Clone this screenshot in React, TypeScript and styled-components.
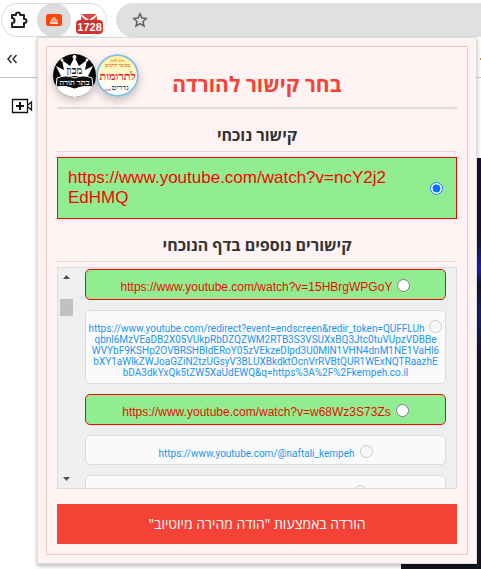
import React, { useState } from "react";
import styled, { createGlobalStyle, css } from "styled-components";

const GlobalStyle = createGlobalStyle`
  * { box-sizing: border-box; }
  body {
    margin: 0;
    background: #fff;
    overflow: hidden;
    font-family: "Open Sans", "Liberation Sans", sans-serif;
  }
`;

const Screen = styled.div`
  position: relative;
  min-height: 100vh;
  display: flex;
  flex-direction: column;
`;

const BrowserBar = styled.header`
  display: flex;
  align-items: center;
  gap: 9px;
  height: 40px;
  padding: 0 0 0 1px;
`;

const ExtensionPill = styled.div`
  display: flex;
  align-items: center;
  width: 106px;
  height: 34px;
  border: 1px solid #dcdcdc;
  border-radius: 17px;
`;

const ToolButton = styled.button<{ $active?: boolean }>`
  position: relative;
  display: flex;
  align-items: center;
  justify-content: center;
  width: 35px;
  height: 34px;
  padding: 0;
  border: 0;
  border-radius: 17px;
  background: ${(p) => (p.$active ? "#dcdcdc" : "transparent")};
`;

const Badge = styled.span`
  position: absolute;
  left: 5px;
  top: 17px;
  padding: 0 1px;
  border-radius: 4px;
  background: #d2302f;
  color: #fff;
  font: bold 11px/14px "Liberation Sans", sans-serif;
`;

const AddressBar = styled.div`
  flex: 1;
  display: flex;
  align-items: center;
  height: 34px;
  padding-left: 16px;
  border-radius: 17px 0 0 17px;
  background: #e0e0e0;
`;

const StarButton = styled.button`
  display: flex;
  padding: 0;
  border: 0;
  background: none;
`;

const Masthead = styled.div`
  display: flex;
  align-items: center;
  justify-content: space-between;
  height: 38px;
  padding-left: 6px;
  border-bottom: 1px solid #c6c6c6;
`;

const Accent = styled.span`
  width: 1px;
  height: 2px;
  background: #e58a2c;
`;

const PageBody = styled.main`
  flex: 1;
  display: flex;
  justify-content: space-between;
  padding-left: 11px;
`;

const CreateButton = styled.button`
  align-self: flex-start;
  display: flex;
  margin-top: 20px;
  padding: 0;
  border: 0;
  background: none;
`;

const VideoBackdrop = styled.div`
  width: 80px;
  margin-top: 80px;
  background: linear-gradient(#15122c, #17152d 20%, #251fa0 27%, #16142a 31%, #201b62 38%, #15131f 50%, #15131f);
`;

const Popup = styled.section`
  position: absolute;
  top: 37px;
  left: 37px;
  right: 4px;
  padding: 8px;
  border: 1px solid #d8dde0;
  background: #fff4f3;
  box-shadow: 0 2px 4px rgba(0, 0, 0, 0.28);
`;

const Panel = styled.form`
  position: relative;
  display: flex;
  flex-direction: column;
  padding: 10px;
  border: 1px solid #f5c6c6;
`;

const Logos = styled.div`
  position: absolute;
  top: 7px;
  left: 6px;
  display: flex;
`;

const Logo = styled.svg`
  display: block;
  width: 43px;
  height: 43px;
  border-radius: 50%;
  box-shadow: 0 4px 8px rgba(0, 0, 0, 0.22);
`;

const Title = styled.h1`
  margin: 0;
  padding: 12px 0 8px;
  border-bottom: 2px solid #dcdcdc;
  color: #f44336;
  font-size: 21px;
  line-height: 30px;
  text-align: center;
`;

const SectionTitle = styled.h2`
  margin: 15px 0 5px;
  padding-bottom: 5px;
  border-bottom: 1px solid #dcdcdc;
  color: #333;
  font-size: 16px;
  line-height: 22px;
  text-align: center;
`;

const Radio = styled.input`
  flex: none;
  width: 13px;
  height: 13px;
  margin: 0;
`;

const CurrentLink = styled.label`
  display: flex;
  align-items: center;
  justify-content: space-between;
  padding: 10px 13px 10px 10px;
  border: 1px solid #f00;
  background: #90ee90;
  color: #f00;
  font: 17px/20px "Liberation Sans", sans-serif;
  white-space: pre-line;
`;

const ListFrame = styled.div`
  display: flex;
  height: 222px;
  border: 1px solid #dcdcdc;
  background: #efefef;
`;

const ScrollTrack = styled.div`
  display: flex;
  flex-direction: column;
  align-items: center;
  width: 17px;
  padding: 7px 0;
`;

const ScrollArrow = styled.svg`
  width: 7px;
  height: 4px;
`;

const ScrollThumb = styled.div`
  width: 13px;
  height: 17px;
  margin: 20px 0 auto;
  background: #c1c1c1;
`;

const LinkList = styled.div`
  flex: 1;
  display: flex;
  flex-direction: column;
  gap: 10px;
  padding: 1px 10px 0;
  overflow: hidden;
`;

const LinkRow = styled.label<{ $video: boolean }>`
  flex: none;
  display: block;
  border: 1px solid #dcdcdc;
  border-radius: 5px;
  background: #fafafa;
  color: #2196f3;
  text-align: center;
  white-space: pre-line;
  font-family: Roboto, "Liberation Sans", sans-serif;
  font-size: 10px;
  line-height: 11px;
  padding: 9px 1px 5px;

  ${Radio} {
    margin-left: 5px;
    vertical-align: -1px;
  }

  ${(p) =>
    p.$video &&
    css`
      border-color: #f00;
      background: #90ee90;
      color: #e60f00;
      font-family: "Liberation Sans", sans-serif;
      font-size: 12px;
      line-height: 14px;
      padding: 9px 1px 5px;
    `}
`;

const EmptyLink = styled.span`
  display: inline-block;
  width: 184px;
`;

const DownloadButton = styled.button`
  height: 40px;
  margin-top: 15px;
  border: 0;
  background: #f44336;
  color: #fff;
  font: 500 14px/20px "Open Sans", sans-serif;
`;

const links = [
  { url: "https://www.youtube.com/watch?v=15HBrgWPGoY", video: true },
  {
    url: `https://www.youtube.com/redirect?event=endscreen&redir_token=QUFFLUh
qbnl6MzVEaDB2X05VUkpRbDZQZWM2RTB3S3VSUXxBQ3Jtc0tuVUpzVDBBe
WVYbF9KSHp2OVBRSHBldERoY05zVEkzeDlpd3U0MlN1VHN4dnM1NE1VaHl6
bXY1aWlkZWJoaGZiN2tzUGsyV3BLUXBkdktOcnVrRVBtQUR1WExNQTRaazhE
bDA3dkYxQk5tZW5XaUdEWQ&q=https%3A%2F%2Fkempeh.co.il`,
    video: false,
  },
  { url: "https://www.youtube.com/watch?v=w68Wz3S73Zs", video: true },
  { url: "https://www.youtube.com/@naftali_kempeh", video: false },
  { url: "", video: false },
];

function CrownLogo() {
  return (
    <Logo viewBox="0 0 43 43">
      <rect width="43" height="43" fill="#050505" />
      <path d="M0 31q21-3 43 0v12H0z" fill="#fff" />
      <path d="M8 22 3 12l8 4-2-10 8 6 4.500-9 4.500 9 8-6-2 10 8-4-5 10z" fill="#fff" />
      <g fill="#fff">
        <circle cx="21.500" cy="3" r="2" />
        <circle cx="9" cy="6" r="1.500" />
        <circle cx="34" cy="6" r="1.500" />
      </g>
      <path d="M4 24q9-4 17.500 0 8.500-4 17.500 0l1 9q-10-2-18.500 2-8.500-4-18.500-2z" fill="#111" stroke="#fff" />
      <g fontFamily="Liberation Serif, serif" fontWeight="bold" textAnchor="middle">
        <text x="21.500" y="20" fontSize="10" fill="#111">מכון</text>
        <text x="21.500" y="31" fontSize="8" fill="#fff">כתר תורה</text>
      </g>
    </Logo>
  );
}

function DonationLogo() {
  return (
    <Logo viewBox="0 0 43 43">
      <defs>
        <linearGradient id="donation" x2="0" y2="1">
          <stop offset="0" stopColor="#fff09a" />
          <stop offset="0.4" stopColor="#fff8c8" />
          <stop offset="0.8" stopColor="#ffffff" />
        </linearGradient>
      </defs>
      <circle cx="21.500" cy="21.500" r="20.500" fill="url(#donation)" stroke="#7fc0ea" strokeWidth="2" />
      <g fontFamily="Liberation Serif, serif" fontWeight="bold" textAnchor="middle">
        <text x="21.500" y="8" fontSize="4" fill="#d9662f">ניתן לתת</text>
        <text x="21.500" y="13" fontSize="5" fill="#d9662f">במזכר הרבים</text>
        <text x="21.500" y="26" fontSize="11" fill="#e8182c">לתרומות</text>
        <text x="24" y="36" fontSize="8" fill="#17567c">נדרים</text>
        <text x="12" y="37" fontSize="3" fill="#e8182c">פלוס</text>
      </g>
    </Logo>
  );
}

export default function App() {
  const [selected, setSelected] = useState(-1);

  return (
    <Screen>
      <GlobalStyle />
      <BrowserBar>
        <ExtensionPill>
          <ToolButton aria-label="Extensions">
            <svg width="18" height="18" viewBox="0 0 18 18" fill="none" stroke="#1f1f1f" strokeWidth="2" strokeLinejoin="round">
              <path d="M2 4h4V3a2 1.500 0 0 1 4 0v1h4v4h.5a2 2 0 0 1 0 4H14v4H2v-4a2 2 0 0 0 0-5z" />
            </svg>
          </ToolButton>
          <ToolButton $active aria-label="Video downloader">
            <svg width="16" height="12" viewBox="0 0 16 12">
              <rect width="16" height="12" rx="2.500" fill="#ff4408" />
              <path d="m4 7.500 1.500-2L7 3.500Q8 2 9 3.500l1.500 2 1.500 2z" fill="#ffd8c8" />
              <path d="M4 8h8v2H4z" fill="#ffd8c8" />
              <path d="M7 5h2M6 7h4" stroke="#ff7a4d" />
            </svg>
          </ToolButton>
          <ToolButton aria-label="Mail">
            <svg width="18" height="14" viewBox="0 0 18 14">
              <path d="M1 1h16L9 7zM1 3l6 5-6 5zM17 3l-6 5 6 5z" fill="#e0443e" />
            </svg>
            <Badge>1728</Badge>
          </ToolButton>
        </ExtensionPill>
        <AddressBar>
          <StarButton aria-label="Bookmark">
            <svg width="16" height="16" viewBox="0 0 16 16" fill="none" stroke="#606060" strokeWidth="1.500">
              <path d="m8 1.800 1.900 4.200 4.500.5-3.400 3 1 4.500L8 11.700 4 14l1-4.500-3.400-3 4.500-.5z" />
            </svg>
          </StarButton>
        </AddressBar>
      </BrowserBar>

      <Masthead>
        <svg width="12" height="10" viewBox="0 0 12 10" fill="none" stroke="#333" strokeWidth="1.500">
          <path d="M5.500 1 2 5l3.500 4M10.500 1 7 5l3.500 4" />
        </svg>
        <Accent />
      </Masthead>

      <PageBody>
        <CreateButton aria-label="Create">
          <svg width="22" height="16" viewBox="0 0 22 16" fill="none" stroke="#111">
            <path d="M1.500 1.500h15v13h-15zM17 7l3.500-3v8L17 9" strokeWidth="1.300" />
            <path d="M9 4v8M5 8h8" strokeWidth="2" />
          </svg>
        </CreateButton>
        <VideoBackdrop />
      </PageBody>

      <Popup>
        <Panel onSubmit={(e) => e.preventDefault()}>
          <Title dir="rtl">בחר קישור להורדה</Title>
          <Logos>
            <CrownLogo />
            <DonationLogo />
          </Logos>

          <SectionTitle dir="rtl">קישור נוכחי</SectionTitle>
          <CurrentLink>
            {"https://www.youtube.com/watch?v=ncY2j2\nEdHMQ"}
            <Radio type="radio" name="link" checked={selected === -1} onChange={() => setSelected(-1)} />
          </CurrentLink>

          <SectionTitle dir="rtl">קישורים נוספים בדף הנוכחי</SectionTitle>
          <ListFrame>
            <ScrollTrack>
              <ScrollArrow viewBox="0 0 7 4"><path d="M0 4 3.500 0 7 4z" fill="#505050" /></ScrollArrow>
              <ScrollThumb />
              <ScrollArrow viewBox="0 0 7 4"><path d="M0 0h7L3.500 4z" fill="#505050" /></ScrollArrow>
            </ScrollTrack>
            <LinkList>
              {links.map((link, i) => {
                const [first, ...rest] = link.url.split("\n");
                return (
                  <LinkRow key={i} $video={link.video}>
                    {first || <EmptyLink />}
                    <Radio
                      type="radio"
                      name="link"
                      aria-label={first || "Link"}
                      disabled={!link.video}
                      checked={selected === i}
                      onChange={() => setSelected(i)}
                    />
                    {rest.length > 0 && "\n" + rest.join("\n")}
                  </LinkRow>
                );
              })}
            </LinkList>
          </ListFrame>

          <DownloadButton type="submit" dir="rtl">הורדה באמצעות "הודה מהירה מיוטיוב"</DownloadButton>
        </Panel>
      </Popup>
    </Screen>
  );
}
